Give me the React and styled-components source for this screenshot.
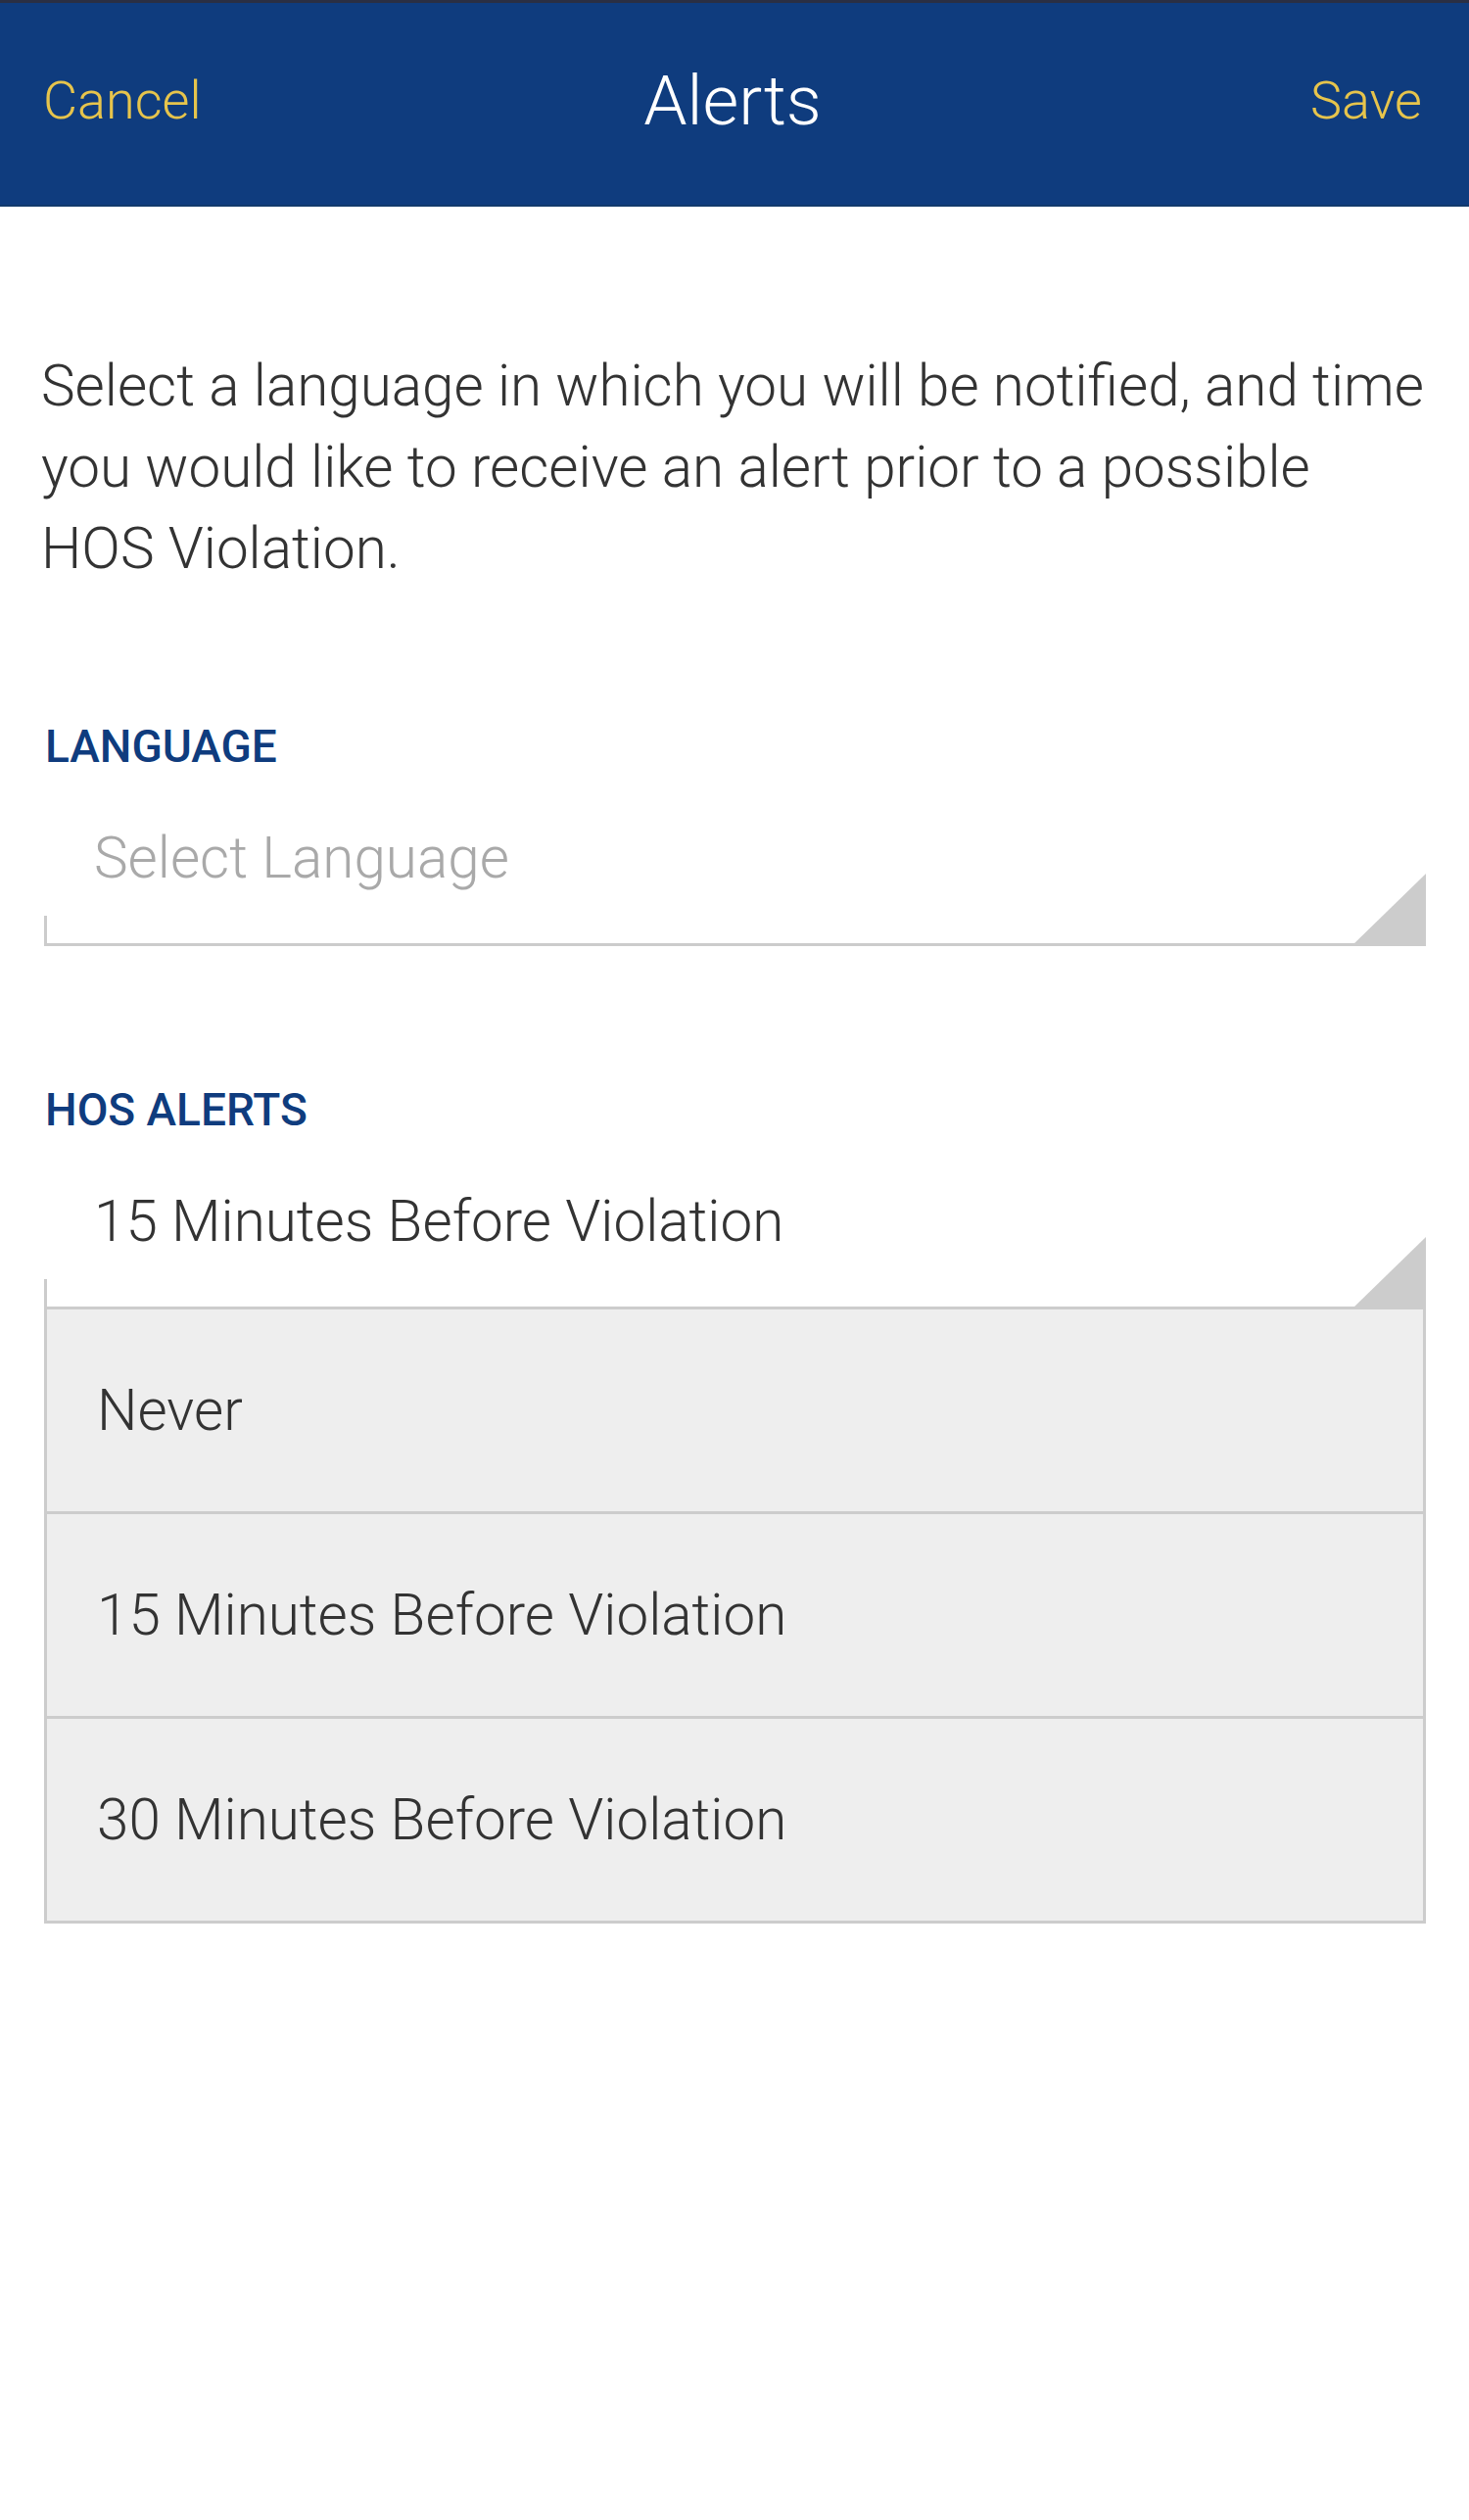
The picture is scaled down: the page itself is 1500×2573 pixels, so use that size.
import React from "react";
import styled, { createGlobalStyle } from "styled-components";

const Global = createGlobalStyle`
  html, body { margin: 0; padding: 0; background: #ffffff; }
  body { font-family: Roboto, "Noto Sans", "Liberation Sans", sans-serif; }
  * { box-sizing: border-box; }
`;

const Page = styled.div`
  width: 1500px;
  min-height: 2573px;
  background: #ffffff;
  display: flex;
  flex-direction: column;
`;

const Header = styled.header`
  height: 211px;
  background: #0f3c7e;
  border-top: 3px solid #2a2f44;
  border-bottom: 2px solid #123a6c;
  display: grid;
  grid-template-columns: 1fr auto 1fr;
  align-items: center;
  padding: 0 48px 8px 44px;
`;

const HeaderAction = styled.button`
  background: none;
  border: none;
  padding: 0;
  font-family: Roboto, "Liberation Sans", sans-serif;
  font-weight: 300;
  font-size: 54px;
  color: #e6c44c;
  justify-self: ${(p) => (p.$end ? "end" : "start")};
  cursor: pointer;
`;

const Title = styled.h1`
  margin: 0;
  font-family: Roboto, "Liberation Sans", sans-serif;
  font-weight: 300;
  font-size: 71px;
  color: #ffffff;
`;

const Content = styled.main`
  display: flex;
  flex-direction: column;
  padding: 142px 44px 0 45px;
`;

const Intro = styled.p`
  margin: 0 0 0 -3px;
  font-weight: 300;
  font-size: 58.4px;
  line-height: 83px;
  color: #333333;
`;

const Section = styled.section`
  display: flex;
  flex-direction: column;
  margin-top: ${(p) => p.$top}px;
`;

const Label = styled.h2`
  margin: 0 0 52px 1px;
  font-weight: 500;
  font-size: 46px;
  line-height: 54px;
  color: #0f3c7e;
`;

const SelectBox = styled.div`
  position: relative;
  width: 1411px;
  padding: 0 0 52px 51px;
  border-bottom: 3px solid #cccccc;
  font-weight: 300;
  font-size: 58.4px;
  line-height: 70px;
  color: ${(p) => (p.$placeholder ? "#a9a9a9" : "#333333")};

  &::before {
    content: "";
    position: absolute;
    left: 0;
    bottom: -3px;
    width: 3px;
    height: 31px;
    background: #cccccc;
  }

  &::after {
    content: "";
    position: absolute;
    right: 0;
    bottom: -3px;
    width: 76px;
    height: 74px;
    background: #cccccc;
    clip-path: polygon(100% 0, 100% 100%, 0 100%);
  }
`;

const OptionList = styled.ul`
  list-style: none;
  margin: 0;
  padding: 0;
  width: 1411px;
  border-left: 3px solid #cccccc;
  border-right: 3px solid #cccccc;
`;

const Option = styled.li`
  height: 209px;
  display: flex;
  align-items: center;
  padding-left: 51px;
  background: #eeeeee;
  border-bottom: 3px solid #cccccc;
  font-weight: 300;
  font-size: 58.4px;
  color: #333333;
`;

const options = ["Never", "15 Minutes Before Violation", "30 Minutes Before Violation"];

export default function App() {
  return (
    <>
      <Global />
      <Page>
        <Header>
          <HeaderAction>Cancel</HeaderAction>
          <Title>Alerts</Title>
          <HeaderAction $end>Save</HeaderAction>
        </Header>
        <Content>
          <Intro>
            Select a language in which you will be notified, and time you would like to receive an alert prior to a possible HOS Violation.
          </Intro>
          <Section $top={133}>
            <Label>LANGUAGE</Label>
            <SelectBox $placeholder>Select Language</SelectBox>
          </Section>
          <Section $top={140}>
            <Label>HOS ALERTS</Label>
            <SelectBox>15 Minutes Before Violation</SelectBox>
            <OptionList>
              {options.map((o) => (
                <Option key={o}>{o}</Option>
              ))}
            </OptionList>
          </Section>
        </Content>
      </Page>
    </>
  );
}
